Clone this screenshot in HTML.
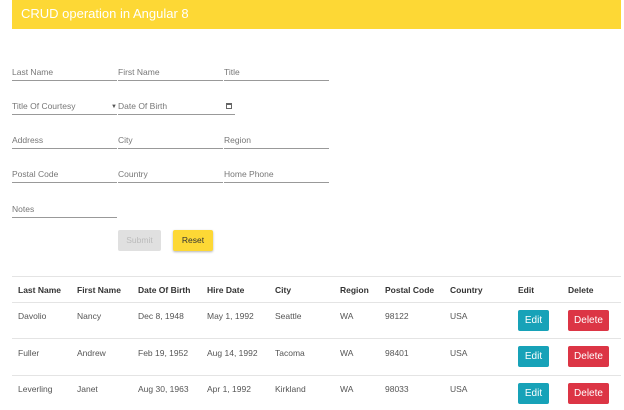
<!DOCTYPE html>
<html><head><meta charset="utf-8"><style>
*{margin:0;padding:0;box-sizing:border-box}
body{width:624px;height:410px;background:#fff;font-family:"Liberation Sans",Arial,sans-serif;position:relative;overflow:hidden;color:#333}
.hdr{position:absolute;left:12px;top:0;width:609px;height:29px;background:#fdd835;color:#fff;font-size:13px;padding:6px 0 0 9px}
.f{position:absolute;height:14px;border-bottom:1px solid #999;font-size:8.5px;color:#777}
.b{position:absolute;font-size:8.5px;border-radius:2px;text-align:center;line-height:21px;height:21px}
.t{position:absolute;font-size:8.5px;color:#555}
.th{position:absolute;font-size:8.5px;font-weight:bold;color:#333}
.ln{position:absolute;left:12px;width:609px;height:1px;background:#e4e4e4}
.e{position:absolute;left:518px;width:31px;height:21px;background:#17a2b8;color:#fff;font-size:10px;text-align:center;line-height:21px;border-radius:2px}
.d{position:absolute;left:568px;width:41px;height:21px;background:#dc3545;color:#fff;font-size:10px;text-align:center;line-height:21px;border-radius:2px}
</style></head><body>
<div class="hdr">CRUD operation in Angular 8</div>
<div class="f" style="left:12px;top:67px;width:105px">Last Name</div>
<div class="f" style="left:118px;top:67px;width:105px">First Name</div>
<div class="f" style="left:224px;top:67px;width:105px">Title</div>
<div class="f" style="left:12px;top:101px;width:105px">Title Of Courtesy<span style="position:absolute;right:0;top:3px;font-size:6px;color:#555">▼</span></div>
<div class="f" style="left:118px;top:101px;width:117px">Date Of Birth<span style="position:absolute;right:3px;top:2px;width:6px;height:6px;border:1px solid #666;border-top-width:2px"></span></div>
<div class="f" style="left:12px;top:135px;width:105px">Address</div>
<div class="f" style="left:118px;top:135px;width:105px">City</div>
<div class="f" style="left:224px;top:135px;width:105px">Region</div>
<div class="f" style="left:12px;top:169px;width:105px">Postal Code</div>
<div class="f" style="left:118px;top:169px;width:105px">Country</div>
<div class="f" style="left:224px;top:169px;width:105px">Home Phone</div>
<div class="f" style="left:12px;top:204px;width:105px">Notes</div>
<div class="b" style="left:118px;top:230px;width:43px;background:#e0e0e0;color:#bbb">Submit</div>
<div class="b" style="left:173px;top:230px;width:40px;background:#fdd835;color:#333;box-shadow:0 1px 2px rgba(0,0,0,.3)">Reset</div>
<div class="ln" style="top:276px"></div>
<div class="th" style="left:18px;top:285px">Last Name</div>
<div class="th" style="left:77px;top:285px">First Name</div>
<div class="th" style="left:138px;top:285px">Date Of Birth</div>
<div class="th" style="left:207px;top:285px">Hire Date</div>
<div class="th" style="left:275px;top:285px">City</div>
<div class="th" style="left:340px;top:285px">Region</div>
<div class="th" style="left:385px;top:285px">Postal Code</div>
<div class="th" style="left:450px;top:285px">Country</div>
<div class="th" style="left:518px;top:285px">Edit</div>
<div class="th" style="left:568px;top:285px">Delete</div>
<div class="ln" style="top:302px"></div>
<div class="t" style="left:18px;top:311px">Davolio</div><div class="t" style="left:77px;top:311px">Nancy</div><div class="t" style="left:138px;top:311px">Dec 8, 1948</div><div class="t" style="left:207px;top:311px">May 1, 1992</div><div class="t" style="left:275px;top:311px">Seattle</div><div class="t" style="left:340px;top:311px">WA</div><div class="t" style="left:385px;top:311px">98122</div><div class="t" style="left:450px;top:311px">USA</div>
<div class="e" style="top:310px">Edit</div><div class="d" style="top:310px">Delete</div>
<div class="ln" style="top:338px"></div>
<div class="t" style="left:18px;top:348px">Fuller</div><div class="t" style="left:77px;top:348px">Andrew</div><div class="t" style="left:138px;top:348px">Feb 19, 1952</div><div class="t" style="left:207px;top:348px">Aug 14, 1992</div><div class="t" style="left:275px;top:348px">Tacoma</div><div class="t" style="left:340px;top:348px">WA</div><div class="t" style="left:385px;top:348px">98401</div><div class="t" style="left:450px;top:348px">USA</div>
<div class="e" style="top:346px">Edit</div><div class="d" style="top:346px">Delete</div>
<div class="ln" style="top:375px"></div>
<div class="t" style="left:18px;top:384px">Leverling</div><div class="t" style="left:77px;top:384px">Janet</div><div class="t" style="left:138px;top:384px">Aug 30, 1963</div><div class="t" style="left:207px;top:384px">Apr 1, 1992</div><div class="t" style="left:275px;top:384px">Kirkland</div><div class="t" style="left:340px;top:384px">WA</div><div class="t" style="left:385px;top:384px">98033</div><div class="t" style="left:450px;top:384px">USA</div>
<div class="e" style="top:383px">Edit</div><div class="d" style="top:383px">Delete</div>
</body></html>
